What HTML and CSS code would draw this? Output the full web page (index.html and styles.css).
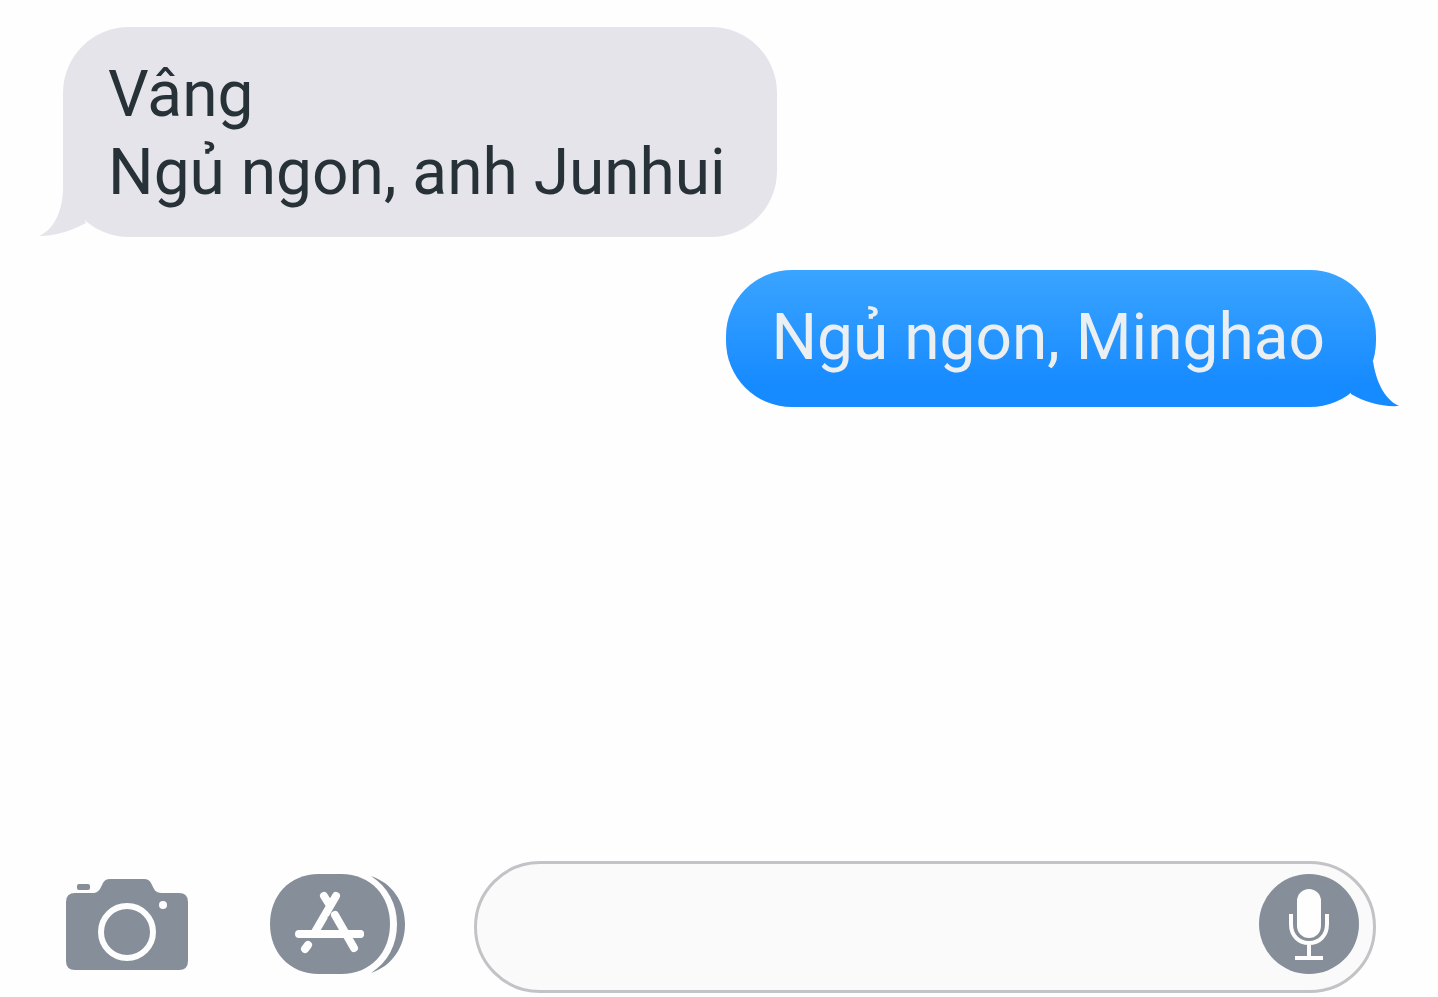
FILE: index.html
```html
<!DOCTYPE html>
<html lang="vi">
<head>
<meta charset="utf-8">
<meta name="viewport" content="width=device-width, initial-scale=1">
<title>Messages</title>
<link rel="stylesheet" href="styles.css">
</head>
<body>
<main class="thread">
  <div class="bubble bubble-in">
    <p class="text">Vâng</p>
    <p class="text">Ngủ ngon, anh Junhui</p>
    <svg class="tail tail-in" viewBox="0 0 50 66" aria-hidden="true"><path d="M25 0V16C25 38 17 58 1 65C18 65 35 59 48 52Z"/></svg>
  </div>
  <div class="bubble bubble-out">
    <p class="text">Ngủ ngon, Minghao</p>
    <svg class="tail tail-out" viewBox="0 0 50 66" aria-hidden="true">
      <defs>
        <linearGradient id="tail-fill" gradientUnits="userSpaceOnUse" x1="0" y1="-71" x2="0" y2="45">
          <stop offset="0" stop-color="#3aa4ff"/>
          <stop offset="1" stop-color="#168aff"/>
        </linearGradient>
      </defs>
      <path fill="url(#tail-fill)" d="M23 20C26 40 34 58 49 65C32 66 14 61 1 53V42Z"/>
    </svg>
  </div>
</main>
<form class="composer">
  <button class="tool camera" type="button" aria-label="Camera">
    <svg viewBox="0 0 136 132" aria-hidden="true">
      <path class="ink" d="M12 32H29C34 32 36 30 38 26L40 22Q42 18 47 18H81Q86 18 88 22L91 28Q93 32 99 32H116Q125 32 125 41V100Q125 109 116 109H12Q3 109 3 100V41Q3 32 12 32Z"/>
      <rect class="ink" x="14" y="23" width="13" height="6" rx="2"/>
      <circle class="line" cx="64" cy="71" r="26" stroke-width="6"/>
      <circle class="paper" cx="100" cy="44" r="4"/>
    </svg>
  </button>
  <button class="tool apps" type="button" aria-label="Apps">
    <svg viewBox="0 0 143 132" aria-hidden="true">
      <path class="ink" d="M54 13H76C106 13 125 35 125 63S106 113 76 113H54C24 113 5 91 5 63S24 13 54 13Z"/>
      <path class="ink" d="M106 15C127 22 140 41 140 63C140 86 127 105 106 112C123 101 132 84 132 63C132 43 123 26 106 15Z"/>
      <path class="line" stroke-width="8" d="M34 73H95M71 35L50 71M43 84L40 88M59 35L64 43"/>
      <path class="gap" d="M68 53L77 69"/>
      <path class="line" stroke-width="8" d="M70 54L89 87M50 73H95"/>
    </svg>
  </button>
  <div class="field">
    <input class="input" type="text" aria-label="Message">
    <button class="mic" type="button" aria-label="Record audio">
      <svg viewBox="0 0 100 100" aria-hidden="true">
        <circle class="ink" cx="50" cy="50" r="50"/>
        <rect class="paper" x="38" y="15" width="24" height="49" rx="12"/>
        <path class="line butt" stroke-width="4" d="M32 40V50C32 62 40 69 50 69S68 62 68 50V40M50 69V83M36 84H64"/>
      </svg>
    </button>
  </div>
</form>
</body>
</html>
```
FILE: styles.css
```css
* {
  box-sizing: border-box;
}

body {
  display: flex;
  flex-direction: column;
  min-height: 100vh;
  margin: 0;
  background: #fefefe;
  font-family: Roboto, "Noto Sans", sans-serif;
}

.thread {
  display: flex;
  flex: 1;
  flex-direction: column;
  gap: 33px;
  padding: 27px 62px 33px 63px;
}

.bubble {
  position: relative;
  border-radius: 66px;
  font-size: 64px;
  line-height: 78px;
}

.bubble-in {
  align-self: flex-start;
  padding: 29px 51px 25px 45px;
  background: #e5e4ea;
  color: #263238;
}

.bubble-out {
  align-self: flex-end;
  padding: 29px 51px 30px 45px;
  background: linear-gradient(#3aa4ff, #168aff 85%);
  color: #eceff1;
}

.text {
  margin: 0;
}

.tail {
  position: absolute;
  bottom: 0;
  width: 50px;
  height: 66px;
}

.tail-in {
  left: -25px;
  fill: #e5e4ea;
}

.tail-out {
  right: -24px;
}

.composer {
  display: flex;
  align-items: center;
  gap: 66px;
  padding: 0 62px 4px 63px;
}

.tool,
.mic {
  flex: none;
  padding: 0;
  border: 0;
  background: none;
}

.tool svg,
.mic svg {
  display: block;
  width: 100%;
}

.camera {
  width: 136px;
}

.apps {
  width: 143px;
}

.field {
  display: flex;
  flex: 1;
  min-width: 0;
  padding: 10px 14px 16px 46px;
  border: 3px solid #c3c3c7;
  border-radius: 66px;
  background: #fafafa;
}

.input {
  flex: 1;
  min-width: 0;
  padding: 0;
  border: 0;
  outline: 0;
  background: none;
  color: #263238;
  font: inherit;
  font-size: 64px;
}

.mic {
  width: 100px;
}

.ink {
  fill: #868e99;
}

.paper {
  fill: #fefefe;
}

.line {
  fill: none;
  stroke: #fefefe;
  stroke-linecap: round;
  stroke-linejoin: round;
}

.butt {
  stroke-linecap: butt;
}

.gap {
  fill: none;
  stroke: #868e99;
  stroke-width: 13px;
}
```
